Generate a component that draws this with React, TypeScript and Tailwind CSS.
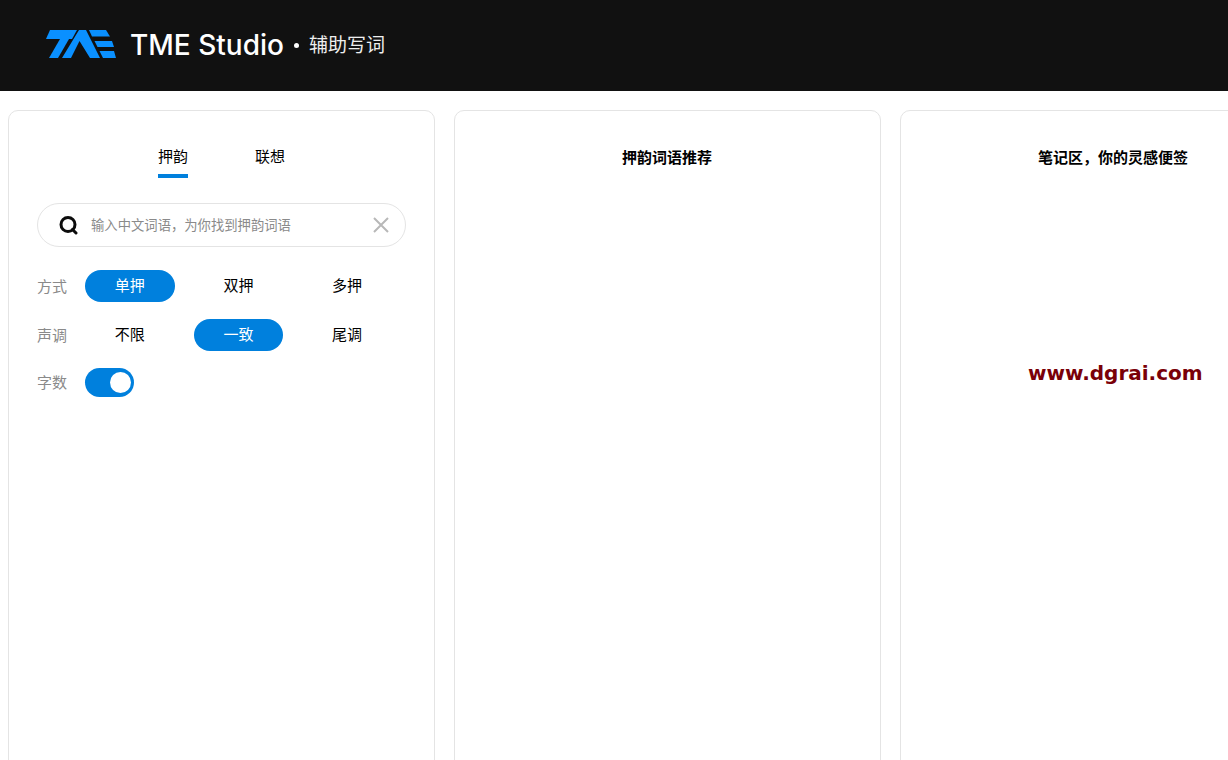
export default function App() {
  const label = "text-[15px] leading-[20px] pt-[1px] text-[#8a8a8a] w-[48px] shrink-0";
  const opt = "w-[89.6px] h-[32px] rounded-full flex items-center justify-center text-[15px] text-black";
  const on = "w-[89.6px] h-[32px] rounded-full flex items-center justify-center text-[15px] text-white bg-[#0080dd]";
  const panel = "w-[427px] shrink-0 h-[700px] bg-white border border-[#e4e4e4] rounded-[10px]";
  return (
    <div className="relative w-[1228px] h-[760px] overflow-hidden bg-white font-['Liberation_Sans','Noto_Sans_CJK_SC',sans-serif]">
      <header className="h-[91px] bg-[#111111] flex items-center pl-[46px] pb-[1px]">
        <svg width="70" height="28" viewBox="0 0 70 28" className="shrink-0 mb-[3px]" fill="#0a90ff">
          <polygon points="4,0 31,0 26,9 0,9" />
          <polygon points="14,9 23,9 12,28 3,28" />
          <polygon points="16,28 33,0 40,0 54,28 44,28 33.5,11 25,28" />
          <polygon points="43,0 60,0 64,6.5 46,6.5" />
          <polygon points="48.5,11 66,11 68,17 51.5,17" />
          <polygon points="53.5,21 68,21 70,28 57,28" />
        </svg>
        <span className="ml-[14px] text-[28px] leading-none font-medium text-white font-['Inter',sans-serif]">TME Studio</span>
        <span className="ml-[10px] w-[5px] h-[5px] rounded-full bg-white" />
        <span className="ml-[10px] mb-[3px] text-[19px] leading-none text-[#eeeeee] font-['Noto_Sans_CJK_SC',sans-serif]">辅助写词</span>
      </header>
      <main className="flex gap-[19px] pl-[8px] pt-[19px]">
        <section className={panel}>
          <div className="flex justify-center gap-[67px] pt-[36px]">
            <div className="flex flex-col items-center">
              <span className="text-[15px] leading-[20px] text-black">押韵</span>
              <span className="mt-[7px] w-[30px] h-[4px] bg-[#0080dd]" />
            </div>
            <span className="text-[15px] leading-[20px] text-black">联想</span>
          </div>
          <div className="mx-[28px] mt-[25px] h-[44px] rounded-full border border-[#e4e4e4] flex items-center pl-[20px] pr-[16px]">
            <svg width="20" height="20" viewBox="0 0 20 20" fill="none" stroke="#0c0c0c" strokeWidth="3" strokeLinecap="round">
              <circle cx="10" cy="9.5" r="7" />
              <path d="M14.5 14.5 L18 18" />
            </svg>
            <span className="ml-[13px] flex-1 pt-[1px] text-[13.33px] text-[#8a8a8a]">输入中文词语，为你找到押韵词语</span>
            <svg width="16" height="16" viewBox="0 0 16 16" stroke="#b8b8b8" strokeWidth="2">
              <path d="M1 1 L15 15 M15 1 L1 15" />
            </svg>
          </div>
          <div className="mx-[28px] mt-[23px] flex items-center">
            <span className={label}>方式</span>
            <div className="flex gap-[19px]">
              <span className={on}>单押</span>
              <span className={opt}>双押</span>
              <span className={opt}>多押</span>
            </div>
          </div>
          <div className="mx-[28px] mt-[17px] flex items-center">
            <span className={label}>声调</span>
            <div className="flex gap-[19px]">
              <span className={opt}>不限</span>
              <span className={on}>一致</span>
              <span className={opt}>尾调</span>
            </div>
          </div>
          <div className="mx-[28px] mt-[17px] flex items-center">
            <span className={label}>字数</span>
            <span className="w-[49px] h-[29px] rounded-full bg-[#0080dd] flex items-center justify-end pr-[3px]">
              <span className="w-[21px] h-[21px] rounded-full bg-white" />
            </span>
          </div>
        </section>
        <section className={panel}>
          <div className="pt-[37px] pl-[167px] text-[15px] leading-[20px] font-bold text-black">押韵词语推荐</div>
        </section>
        <section className={panel}>
          <div className="pt-[37px] pl-[137px] text-[15px] leading-[20px] font-bold text-black">笔记区，你的灵感便签</div>
        </section>
      </main>
      <div className="absolute left-[1028px] top-[359px] text-[20px] leading-[28px] font-bold text-[#7a0008] font-['DejaVu_Sans',sans-serif] whitespace-nowrap">www.dgrai.com</div>
    </div>
  );
}
